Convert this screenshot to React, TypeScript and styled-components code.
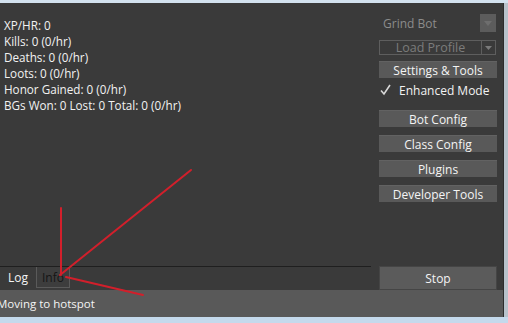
import * as React from 'react'
import styled, { createGlobalStyle } from 'styled-components'

const Global = createGlobalStyle`
  html, body { margin: 0; padding: 0; background: #3a3a3a; }
  body { font-family: "Open Sans", "Noto Sans", sans-serif; }
`

const Window = styled.div`
  position: relative;
  width: 508px;
  height: 323px;
  display: flex;
  flex-direction: column;
  overflow: hidden;
  background: #3a3a3a;
`

const TopFrame = styled.div`
  height: 3px;
  background: #d3e2ef;
`

const BottomFrame = styled.div`
  height: 6px;
  background: #c4d9ec;
`

const Body = styled.div`
  flex: 1;
  display: flex;
`

const RightFrame = styled.div`
  width: 4px;
  border-left: 1px solid #2c2c2c;
  background: #b8c2cb;
`

const Main = styled.div`
  flex: 1;
  display: flex;
  flex-direction: column;
`

const Content = styled.div`
  flex: 1;
  display: flex;
`

const Stats = styled.div`
  flex: 1;
  padding: 14px 0 0 4px;
  color: #f2f2f2;
  font-size: 11.7px;
  line-height: 16px;
`

const Side = styled.div`
  width: 118px;
  margin-right: 6px;
  padding-top: 11px;
  display: flex;
  flex-direction: column;
`

const BotRow = styled.div`
  height: 18px;
  display: flex;
  align-items: center;
  justify-content: space-between;
  color: #8c8c8c;
  font-size: 12px;
  padding-left: 4px;
  margin-right: 1px;
`

const ArrowBox = styled.div`
  width: 16px;
  height: 18px;
  background: #5c5c5c;
  display: flex;
  align-items: center;
  justify-content: center;
`

const Combo = styled.div`
  margin-top: 8px;
  height: 13px;
  border: 1px solid #5e5e5e;
  display: flex;
  color: #7c7c7c;
  font-size: 12.5px;
  margin-right: 1px;
`

const ComboText = styled.div`
  flex: 1;
  display: flex;
  align-items: center;
  justify-content: center;
`

const ComboArrow = styled.div`
  width: 13px;
  border-left: 1px solid #5e5e5e;
  display: flex;
  align-items: center;
  justify-content: center;
`

const Button = styled.div<{ $gap?: number }>`
  margin-top: ${p => p.$gap ?? 8}px;
  height: 17px;
  background: #595959;
  border-top: 1px solid #626262;
  box-sizing: border-box;
  color: #f4f4f4;
  font-size: 12px;
  display: flex;
  align-items: center;
  justify-content: center;
`

const Check = styled.div`
  margin-top: 5px;
  height: 14px;
  display: flex;
  align-items: center;
  gap: 8px;
  color: #f2f2f2;
  font-size: 12px;
  padding-left: 1px;
`

const Bottom = styled.div`
  height: 24px;
  display: flex;
`

const Tabs = styled.div`
  width: 371px;
  border-top: 1px solid #1f1f1f;
  display: flex;
  align-items: flex-start;
  font-size: 12px;
`

const Tab = styled.div<{ $active?: boolean }>`
  height: 21px;
  box-sizing: border-box;
  padding: 0 ${p => (p.$active ? 7 : 5)}px;
  display: flex;
  align-items: center;
  color: ${p => (p.$active ? '#f4f4f4' : '#151515')};
  border: 1px solid ${p => (p.$active ? 'transparent' : '#5a5a5a')};
  border-top: none;
  background: ${p => (p.$active ? 'transparent' : '#3d3d3d')};
`

const StopButton = styled.div`
  margin-left: 8px;
  width: 118px;
  height: 24px;
  box-sizing: border-box;
  background: #5b5b5b;
  border: 1px solid #454545;
  color: #f4f4f4;
  font-size: 12px;
  display: flex;
  align-items: center;
  justify-content: center;
`

const Status = styled.div`
  height: 27px;
  background: #595959;
  color: #f4f4f4;
  font-size: 11.5px;
  display: flex;
  align-items: center;
`

const StatusText = styled.span`
  margin-left: -3px;
`

const Overlay = styled.svg`
  position: absolute;
  left: 0;
  top: 0;
  pointer-events: none;
`

const stats = [
  'XP/HR: 0',
  'Kills: 0 (0/hr)',
  'Deaths: 0 (0/hr)',
  'Loots: 0 (0/hr)',
  'Honor Gained: 0 (0/hr)',
  'BGs Won: 0 Lost: 0 Total: 0 (0/hr)',
]

export default function App() {
  return (
    <Window>
      <Global />
      <TopFrame />
      <Body>
        <Main>
          <Content>
            <Stats>
              {stats.map(s => (
                <div key={s}>{s}</div>
              ))}
            </Stats>
            <Side>
              <BotRow>
                Grind Bot
                <ArrowBox>
                  <svg width="8" height="5" viewBox="0 0 8 5">
                    <path d="M0 0 L8 0 L4 5 Z" fill="#6e6e6e" />
                  </svg>
                </ArrowBox>
              </BotRow>
              <Combo>
                <ComboText>Load Profile</ComboText>
                <ComboArrow>
                  <svg width="7" height="4" viewBox="0 0 7 4">
                    <path d="M0 0 L7 0 L3.5 4 Z" fill="#7a7a7a" />
                  </svg>
                </ComboArrow>
              </Combo>
              <Button $gap={6}>Settings &amp; Tools</Button>
              <Check>
                <svg width="11" height="12" viewBox="0 0 11 12">
                  <path d="M1 6.5 L4 10 L10 1" stroke="#d8d8d8" strokeWidth="1.6" fill="none" />
                </svg>
                Enhanced Mode
              </Check>
              <Button $gap={13}>Bot Config</Button>
              <Button>Class Config</Button>
              <Button>Plugins</Button>
              <Button>Developer Tools</Button>
            </Side>
          </Content>
          <Bottom>
            <Tabs>
              <Tab $active>Log</Tab>
              <Tab>Info</Tab>
            </Tabs>
            <StopButton>Stop</StopButton>
          </Bottom>
          <Status>
            <StatusText>Moving to hotspot</StatusText>
          </Status>
        </Main>
        <RightFrame />
      </Body>
      <BottomFrame />
      <Overlay width="508" height="323" viewBox="0 0 508 323">
        <g stroke="#d21f2b" strokeWidth="2" strokeLinecap="round" fill="none">
          <line x1="191" y1="170" x2="60" y2="275" />
          <line x1="61" y1="208" x2="61" y2="275" />
          <line x1="66" y1="277" x2="143" y2="295" />
        </g>
      </Overlay>
    </Window>
  )
}
